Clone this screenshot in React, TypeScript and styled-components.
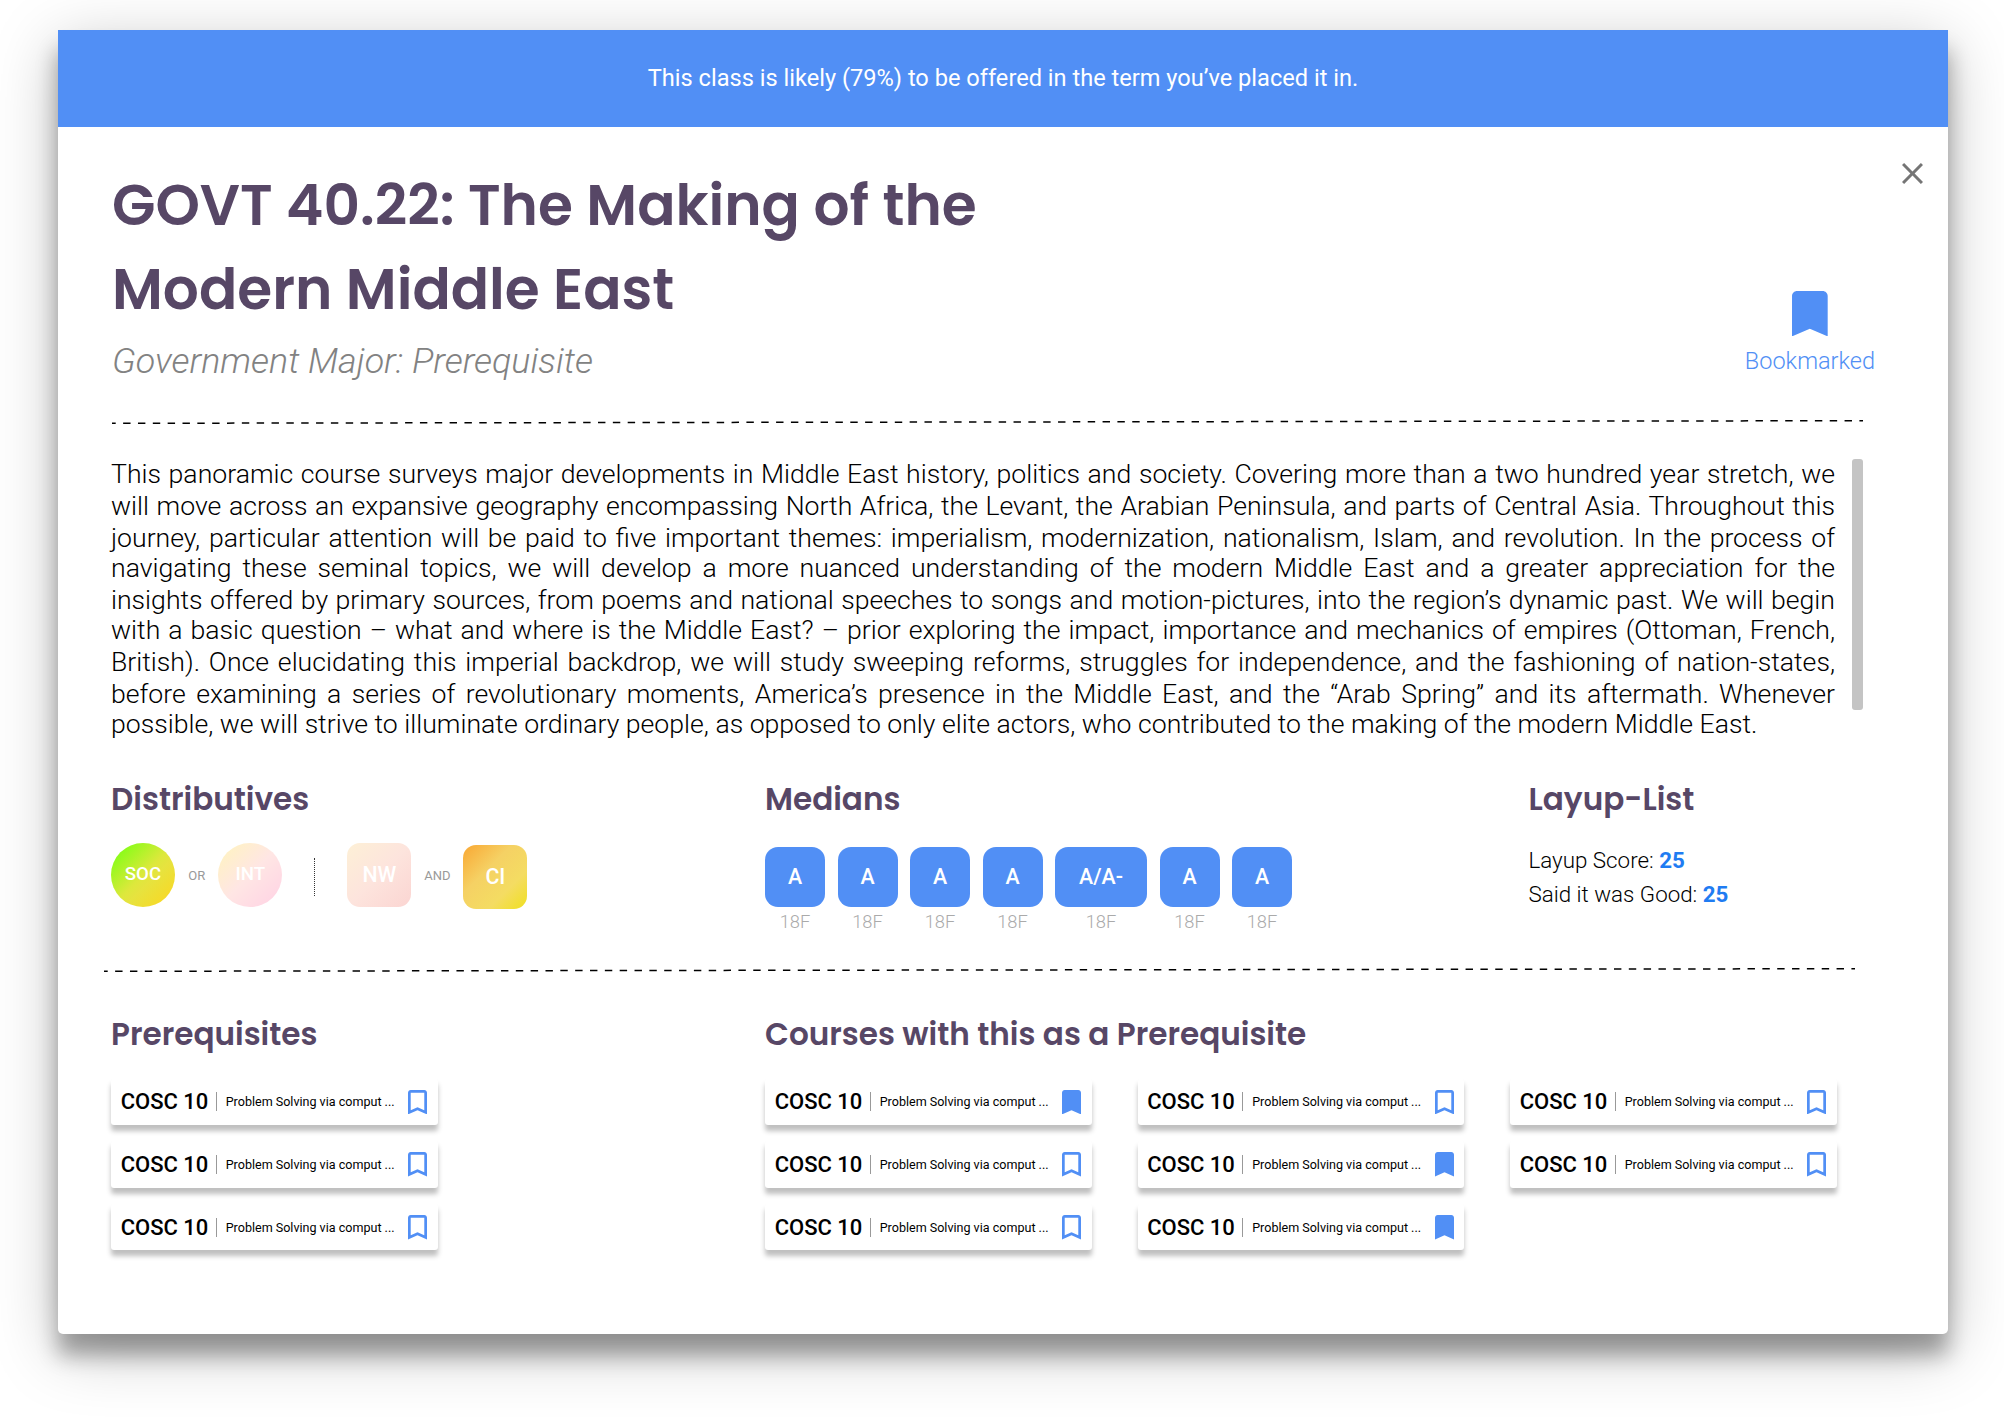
import React from "react";
import styled, { createGlobalStyle } from "styled-components";

const BLUE = "#518ff5";
const PLUM = "#574766";

const Global = createGlobalStyle`
  *, *::before, *::after { box-sizing: border-box; }
  body { margin: 0; background: #fff; font-family: Roboto, "Liberation Sans", sans-serif; color: #000; }
  h1, h2, p { margin: 0; }
`;

const Page = styled.div`
  width: 2004px;
  height: 1418px;
  padding: 30px 56px 84px 58px;
  overflow: hidden;
`;

const Modal = styled.main`
  width: 1890px;
  height: 1304px;
  background: #fff;
  border-radius: 0 0 5px 5px;
  box-shadow: 0 21px 21px rgba(0, 0, 0, 0.32), 0 16px 64px rgba(0, 0, 0, 0.25);
`;

const Banner = styled.div`
  display: flex;
  align-items: center;
  justify-content: center;
  height: 97px;
  padding-bottom: 2px;
  background: ${BLUE};
  color: #fff;
  font-size: 23.6px;
`;

const Body = styled.div`
  padding: 36px 25px 0 53px;
`;

const Header = styled.header`
  display: flex;
  justify-content: space-between;
  height: 255.6px;
`;

const Title = styled.h1`
  padding: 1px 0 0 1px;
  color: ${PLUM};
  font: 600 56.55px/84px Poppins, Inter, sans-serif;
`;

const Subtitle = styled.p`
  margin: 8px 0 0 1px;
  color: #828282;
  font-size: 35.85px;
  font-style: italic;
  font-weight: 300;
  line-height: 42px;
`;

const Actions = styled.div`
  display: flex;
  flex-direction: column;
  align-items: flex-end;
`;

const Icon = styled.svg<{ $w: number; $h: number }>`
  display: block;
  flex: none;
  width: ${(p) => p.$w}px;
  height: ${(p) => p.$h}px;
`;

const BookmarkAction = styled.div`
  display: flex;
  flex-direction: column;
  align-items: center;
  gap: 11px;
  margin: 107px 48px 0 0;
  color: ${BLUE};
  font-size: 23.5px;
  font-weight: 300;
  line-height: 28px;
`;

const Rule = styled.svg<{ $shift?: number }>`
  display: block;
  width: 1753px;
  height: 6px;
  margin-left: ${(p) => p.$shift ?? 0}px;
`;

const Description = styled.div`
  display: flex;
  justify-content: space-between;
  width: 1752px;
  height: 349.4px;
  padding-top: 34.4px;
`;

const Paragraph = styled.p`
  width: 1724px;
  font-size: 26.64px;
  font-weight: 300;
`;

const Line = styled.span<{ $h: number; $last?: boolean }>`
  display: block;
  height: ${(p) => p.$h}px;
  line-height: 30px;
  white-space: nowrap;
  text-align: justify;
  text-align-last: ${(p) => (p.$last ? "left" : "justify")};
`;

const ScrollThumb = styled.div`
  width: 11px;
  height: 251px;
  border-radius: 3px;
  background: #c4c4c4;
`;

const Columns = styled.div<{ $cols: string; $h: number; $top?: number }>`
  display: grid;
  grid-template-columns: ${(p) => p.$cols};
  height: ${(p) => p.$h}px;
  padding-top: ${(p) => p.$top ?? 0}px;
`;

const Heading = styled.h2`
  color: ${PLUM};
  font: 600 31.1px/48px Poppins, Inter, sans-serif;
  white-space: nowrap;
`;

const Badges = styled.div`
  display: flex;
  align-items: flex-start;
  margin-top: 20px;
`;

const Badge = styled.div<{ $round?: boolean; $bg: string; $drop?: number; $lift?: number }>`
  display: flex;
  align-items: center;
  justify-content: center;
  width: 64px;
  height: 64px;
  margin-top: ${(p) => p.$drop ?? 0}px;
  padding-bottom: ${(p) => p.$lift ?? 0}px;
  border-radius: ${(p) => (p.$round ? "50%" : "13px")};
  background: ${(p) => p.$bg};
  color: #fff;
  font-size: ${(p) => (p.$round ? 18.67 : 21.33)}px;
  font-weight: 500;
`;

const Joiner = styled.span<{ $w: number }>`
  width: ${(p) => p.$w}px;
  padding-top: 25px;
  color: #999;
  font-size: 13px;
  line-height: 16px;
  text-align: center;
`;

const Dotted = styled.div`
  width: 2px;
  height: 38px;
  margin: 15px 31px 0 32px;
  border-left: 1.5px dotted #333;
`;

const Grades = styled.div`
  display: flex;
  gap: 12.5px;
  margin-top: 24px;
`;

const Grade = styled.div`
  color: #aaa;
  font-size: 18.3px;
  font-weight: 300;
  line-height: 22px;
  text-align: center;
`;

const GradeTile = styled.div<{ $wide?: boolean }>`
  display: flex;
  align-items: center;
  justify-content: center;
  width: ${(p) => (p.$wide ? 92 : 60)}px;
  height: 60px;
  margin-bottom: 4px;
  border-radius: 13px;
  background: ${BLUE};
  color: #fff;
  font-size: 21.33px;
  font-weight: 500;
`;

const Score = styled.p`
  font-size: 22.35px;
  font-weight: 300;
  line-height: 34px;
  b { color: #1f7cf2; font-weight: 700; }
`;

const Scores = styled.div`
  margin-top: 20px;
`;

const CourseGrid = styled.div<{ $n: number }>`
  display: grid;
  grid-template-columns: repeat(${(p) => p.$n}, 326.5px);
  grid-template-rows: repeat(3, 46.3px);
  grid-auto-flow: column;
  gap: 16.4px 46px;
  margin-top: 20.8px;
`;

const Course = styled.div`
  display: flex;
  align-items: center;
  padding: 0 10.5px 0 9.7px;
  border-radius: 3px;
  background: #fff;
  box-shadow: 0 5.3px 5.3px rgba(0, 0, 0, 0.25);
`;

const Code = styled.span`
  width: 95px;
  font-size: 22px;
  font-weight: 500;
  white-space: nowrap;
`;

const Name = styled.span`
  flex: 1;
  margin-left: 9px;
  font-size: 12.55px;
  white-space: nowrap;
`;

const Bar = styled.i`
  width: 1px;
  height: 19px;
  background: #999;
`;

function Bookmark({ w, h, filled }: { w: number; h: number; filled?: boolean }) {
  return (
    <Icon $w={w} $h={h} viewBox="5 3 14 18" preserveAspectRatio="none" fill={BLUE}>
      <path
        d={
          filled
            ? "M17 3H7c-1.1 0-1.99.9-1.99 2L5 21l7-3 7 3V5c0-1.1-.9-2-2-2z"
            : "M17 3H7c-1.1 0-1.99.9-1.99 2L5 21l7-3 7 3V5c0-1.1-.9-2-2-2zm0 15l-5-2.18L7 18V5h10v13z"
        }
      />
    </Icon>
  );
}

function DashRule({ shift }: { shift?: number }) {
  return (
    <Rule $shift={shift} viewBox="0 0 1753 6">
      <line x1="1" y1="4.3" x2="1752" y2="1.7" stroke="#000" strokeWidth="1.5" strokeDasharray="7.42 7.42" strokeDashoffset="3.71" />
    </Rule>
  );
}

function CourseCard({ saved }: { saved?: boolean }) {
  return (
    <Course>
      <Code>COSC 10</Code>
      <Bar />
      <Name>Problem Solving via comput ...</Name>
      <Bookmark w={19} h={24.4} filled={saved} />
    </Course>
  );
}

const LINES: [string, number][] = [
  ["This panoramic course surveys major developments in Middle East history, politics and society. Covering more than a two hundred year stretch, we", 32],
  ["will move across an expansive geography encompassing North Africa, the Levant, the Arabian Peninsula, and parts of Central Asia. Throughout this", 32],
  ["journey, particular attention will be paid to five important themes: imperialism, modernization, nationalism, Islam, and revolution. In the process of", 30],
  ["navigating these seminal topics, we will develop a more nuanced understanding of the modern Middle East and a greater appreciation for the", 32],
  ["insights offered by primary sources, from poems and national speeches to songs and motion-pictures, into the region’s dynamic past. We will begin", 30],
  ["with a basic question – what and where is the Middle East? – prior exploring the impact, importance and mechanics of empires (Ottoman, French,", 32],
  ["British). Once elucidating this imperial backdrop, we will study sweeping reforms, struggles for independence, and the fashioning of nation-states,", 32],
  ["before examining a series of revolutionary moments, America’s presence in the Middle East, and the “Arab Spring” and its aftermath. Whenever", 30],
  ["possible, we will strive to illuminate ordinary people, as opposed to only elite actors, who contributed to the making of the modern Middle East.", 32],
];

const GRADES = ["A", "A", "A", "A", "A/A-", "A", "A"];
const FOLLOWING = [true, false, false, false, true, true, false, false];

export default function App() {
  return (
    <Page>
      <Global />
      <Modal>
        <Banner>This class is likely (79%) to be offered in the term you’ve placed it in.</Banner>
        <Body>
          <Header>
            <div>
              <Title>
                GOVT 40.22: The Making of the
                <br />
                Modern Middle East
              </Title>
              <Subtitle>Government Major: Prerequisite</Subtitle>
            </div>
            <Actions>
              <Icon $w={21} $h={21} viewBox="5 5 14 14" fill="#757575">
                <path d="M19 6.41L17.59 5 12 10.59 6.41 5 5 6.41 10.59 12 5 17.59 6.41 19 12 13.41 17.59 19 19 17.59 13.41 12z" />
              </Icon>
              <BookmarkAction>
                <Bookmark w={35.7} h={45.4} filled />
                Bookmarked
              </BookmarkAction>
            </Actions>
          </Header>
          <DashRule />
          <Description>
            <Paragraph>
              {LINES.map(([text, h], i) => (
                <Line key={i} $h={h} $last={i === LINES.length - 1}>
                  {text}
                </Line>
              ))}
            </Paragraph>
            <ScrollThumb />
          </Description>
          <Columns $cols="654px 763.5px 1fr" $h={193} $top={1}>
            <section>
              <Heading>Distributives</Heading>
              <Badges>
                <Badge $round $lift={2} $bg="linear-gradient(135deg,#7dff14 8%,#dde83c 50%,#e6e33f 60%,#fbd722 95%)">SOC</Badge>
                <Joiner $w={43.4}>OR</Joiner>
                <Badge $round $lift={2} $bg="linear-gradient(135deg,#fff2c4 10%,#ffe6e4 50%,#ffd3e4 95%)">INT</Badge>
                <Dotted />
                <Badge $bg="linear-gradient(135deg,#fdf0d6,#fde4dd 50%,#fbd5d2)">NW</Badge>
                <Joiner $w={52}>AND</Joiner>
                <Badge $drop={2} $bg="linear-gradient(135deg,#f9a733,#f5d164 38%,#f4dc62 70%,#f0e01f)">CI</Badge>
              </Badges>
            </section>
            <section>
              <Heading>Medians</Heading>
              <Grades>
                {GRADES.map((g, i) => (
                  <Grade key={i}>
                    <GradeTile $wide={g.length > 1}>{g}</GradeTile>
                    18F
                  </Grade>
                ))}
              </Grades>
            </section>
            <section>
              <Heading>Layup-List</Heading>
              <Scores>
                <Score>Layup Score: <b>25</b></Score>
                <Score>Said it was Good: <b>25</b></Score>
              </Scores>
            </section>
          </Columns>
          <DashRule shift={-8.5} />
          <Columns $cols="654px 1fr" $h={300} $top={37}>
            <section>
              <Heading>Prerequisites</Heading>
              <CourseGrid $n={1}>
                <CourseCard />
                <CourseCard />
                <CourseCard />
              </CourseGrid>
            </section>
            <section>
              <Heading>Courses with this as a Prerequisite</Heading>
              <CourseGrid $n={3}>
                {FOLLOWING.map((saved, i) => (
                  <CourseCard key={i} saved={saved} />
                ))}
              </CourseGrid>
            </section>
          </Columns>
        </Body>
      </Modal>
    </Page>
  );
}
